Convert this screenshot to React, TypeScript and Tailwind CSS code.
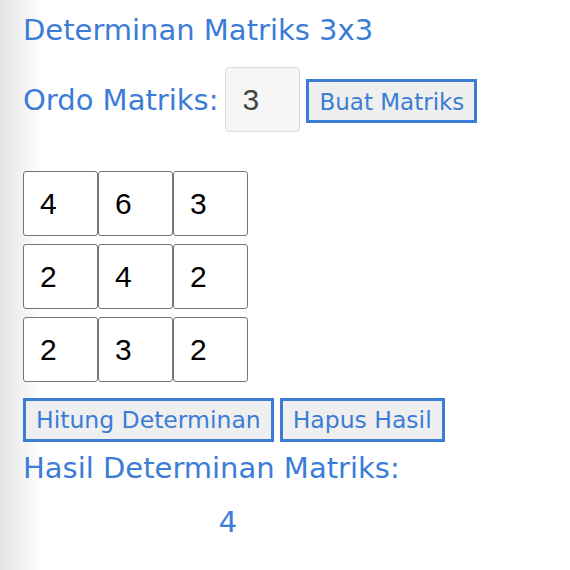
const matrix = [
  [4, 6, 3],
  [2, 4, 2],
  [2, 3, 2],
];

const blue = "text-[#3b7dd6]";

const App = () => {
  return (
    <div className="min-h-screen bg-[linear-gradient(to_right,#e4e4e4,#ffffff_42px)] pl-[23px] pt-[13px] font-['DejaVu_Sans',sans-serif]">
      <h1 className={`text-[29px] leading-[34px] ${blue}`}>
        Determinan Matriks 3x3
      </h1>

      {/* ordo + tombol buat */}
      <div className="mt-[20px] flex items-baseline">
        <span className={`text-[29px] leading-[34px] ${blue}`}>
          Ordo Matriks:
        </span>
        <input
          readOnly
          value="3"
          className="ml-[7px] h-[65px] w-[75px] rounded-[4px] border border-[#dcdcdc] bg-[#f6f6f6] pl-[16px] font-['Liberation_Sans',sans-serif] text-[30px] text-[#444]"
        />
        <button
          className={`ml-[6px] h-[44px] border-[3px] border-[#3b7dd6] bg-[#efefef] px-[10px] pt-[2px] text-[23px] leading-[30px] ${blue}`}
        >
          Buat Matriks
        </button>
      </div>

      <div className="mt-[39px] grid w-fit grid-cols-[repeat(3,75px)] gap-y-[8px]">
        {matrix.flat().map((n, i) => (
          <input
            key={i}
            readOnly
            value={n}
            className="h-[65px] w-[75px] rounded-[3px] border border-[#767676] bg-white pl-[16px] font-['Liberation_Sans',sans-serif] text-[30px] text-black"
          />
        ))}
      </div>

      <div className="mt-[16px] flex gap-[6px]">
        <button
          className={`h-[44px] border-[3px] border-[#3b7dd6] bg-[#efefef] px-[10px] text-[23.5px] leading-[30px] ${blue}`}
        >
          Hitung Determinan
        </button>
        <button
          className={`h-[44px] border-[3px] border-[#3b7dd6] bg-[#efefef] px-[10px] text-[23.5px] leading-[30px] ${blue}`}
        >
          Hapus Hasil
        </button>
      </div>

      <h2 className={`mt-[9px] text-[29px] leading-[34px] ${blue}`}>
        Hasil Determinan Matriks:
      </h2>
      <div className={`mt-[20px] w-[410px] text-center text-[29px] leading-[34px] ${blue}`}>
        4
      </div>
    </div>
  );
};

export default App;
